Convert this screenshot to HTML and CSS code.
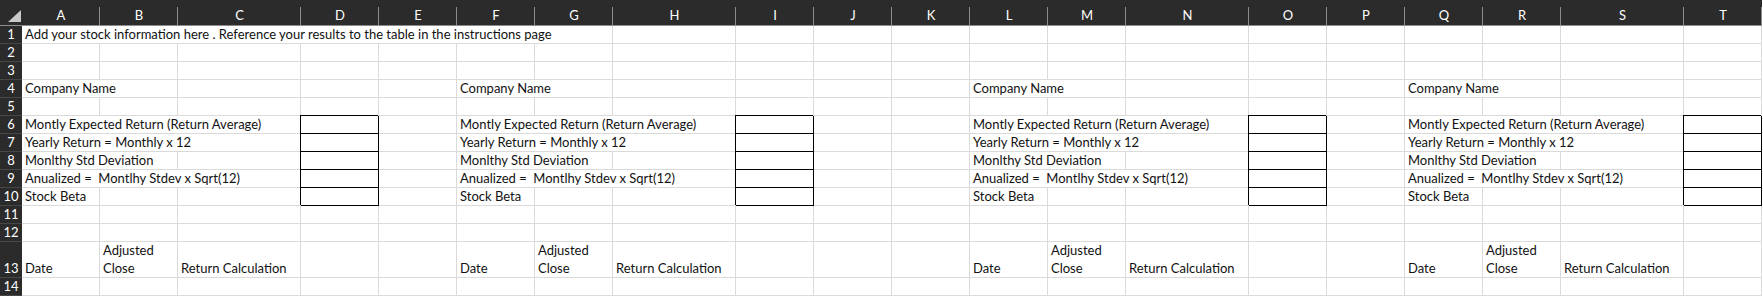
FILE: index.html
```html
<!DOCTYPE html>
<html lang="en">
<head>
  <meta charset="UTF-8" />
  <meta name="viewport" content="width=device-width, initial-scale=1.0"/>
  <title>Stock Information</title>
  <link rel="stylesheet" href="styles.css">
</head>
<body>

  <div class="sheet" id="sheet"></div>

  <script>
    const letters = "ABCDEFGHIJKLMNOPQRST".split("");
    const rowCount = 14;

    // cells keyed by "row:colIndex" -> text, span, extra class
    const cells = {
      "1:0": { text: "Add your stock information here . Reference your results to the table in the instructions page", span: 7 }
    };

    const blockStarts = [0, 5, 11, 16];

    for (const start of blockStarts) {
      cells["4:" + start] = { text: "Company Name", span: 2 };
      cells["6:" + start] = { text: "Montly Expected Return (Return Average)", span: 3 };
      cells["7:" + start] = { text: "Yearly Return = Monthly x 12", span: 3 };
      cells["8:" + start] = { text: "Monlthy Std Deviation", span: 2 };
      cells["9:" + start] = { text: "Anualized =  Montlhy Stdev x Sqrt(12)", span: 3 };
      cells["10:" + start] = { text: "Stock Beta", span: 1 };
      for (let r = 6; r <= 10; r++) {
        cells[r + ":" + (start + 3)] = { text: "", span: 1, cls: "box" };
      }
      cells["13:" + start] = { text: "Date", span: 1 };
      cells["13:" + (start + 1)] = { text: "Adjusted Close", span: 1, cls: "wrap" };
      cells["13:" + (start + 2)] = { text: "Return Calculation", span: 1 };
    }

    const sheet = document.getElementById("sheet");

    function addCell(cls, text) {
      const el = document.createElement("div");
      el.className = cls;
      if (text) el.textContent = text;
      sheet.appendChild(el);
      return el;
    }

    // header row
    const corner = addCell("corner");
    corner.innerHTML = '<svg width="22" height="25" viewBox="0 0 22 25"><polygon points="8,22 21,22 21,10" fill="#c9c9c9"/></svg>';
    for (const l of letters) addCell("col-head", l);

    // body rows
    for (let r = 1; r <= rowCount; r++) {
      addCell("row-head", String(r));
      let c = 0;
      while (c < letters.length) {
        const spec = cells[r + ":" + c];
        if (spec) {
          const el = addCell("cell" + (spec.cls ? " " + spec.cls : ""), spec.text);
          if (spec.span > 1) el.style.gridColumn = "span " + spec.span;
          c += spec.span;
        } else {
          addCell("cell");
          c++;
        }
      }
    }
  </script>

</body>
</html>
```
FILE: styles.css
```css
* {
  box-sizing: border-box;
}

html, body {
  margin: 0;
  padding: 0;
  background: #ffffff;
  font-family: "Lato", "Liberation Sans", sans-serif;
  font-size: 13px;
  color: #000;
}

.sheet {
  display: grid;
  grid-template-columns:
    22px
    78px 78px 123px 78px 78px 78px 78px 123px 78px 78px
    78px 78px 78px 123px 78px 78px 78px 78px 123px 78px;
  grid-template-rows: 26px repeat(12, 18px) 36px 18px;
}

/* header row */
.corner {
  background: #2b2b2b;
  border-bottom: 1px solid #8c8c8c;
}

.corner svg {
  display: block;
}

.col-head {
  background: linear-gradient(#8c8c8c, #8c8c8c) right bottom / 1px 18px no-repeat, #2b2b2b;
  border-bottom: 1px solid #8c8c8c;
  color: #ffffff;
  text-align: center;
  padding-top: 7px;
  line-height: 17px;
}

.row-head {
  background: #2b2b2b;
  border-bottom: 1px solid #474747;
  color: #ffffff;
  display: flex;
  align-items: flex-end;
  justify-content: center;
  line-height: 18px;
}

/* cells */
.cell {
  border-right: 1px solid #dadada;
  border-bottom: 1px solid #dadada;
  background: #ffffff;
  padding: 0 2px 0 3px;
  display: flex;
  align-items: flex-end;
  white-space: pre;
  overflow: hidden;
  line-height: 18px;
  color: #111;
}

.cell.wrap {
  white-space: normal;
}

.cell.box {
  border-right-color: #000;
  border-bottom-color: #000;
  box-shadow: -1px -1px 0 #000;
}
```
